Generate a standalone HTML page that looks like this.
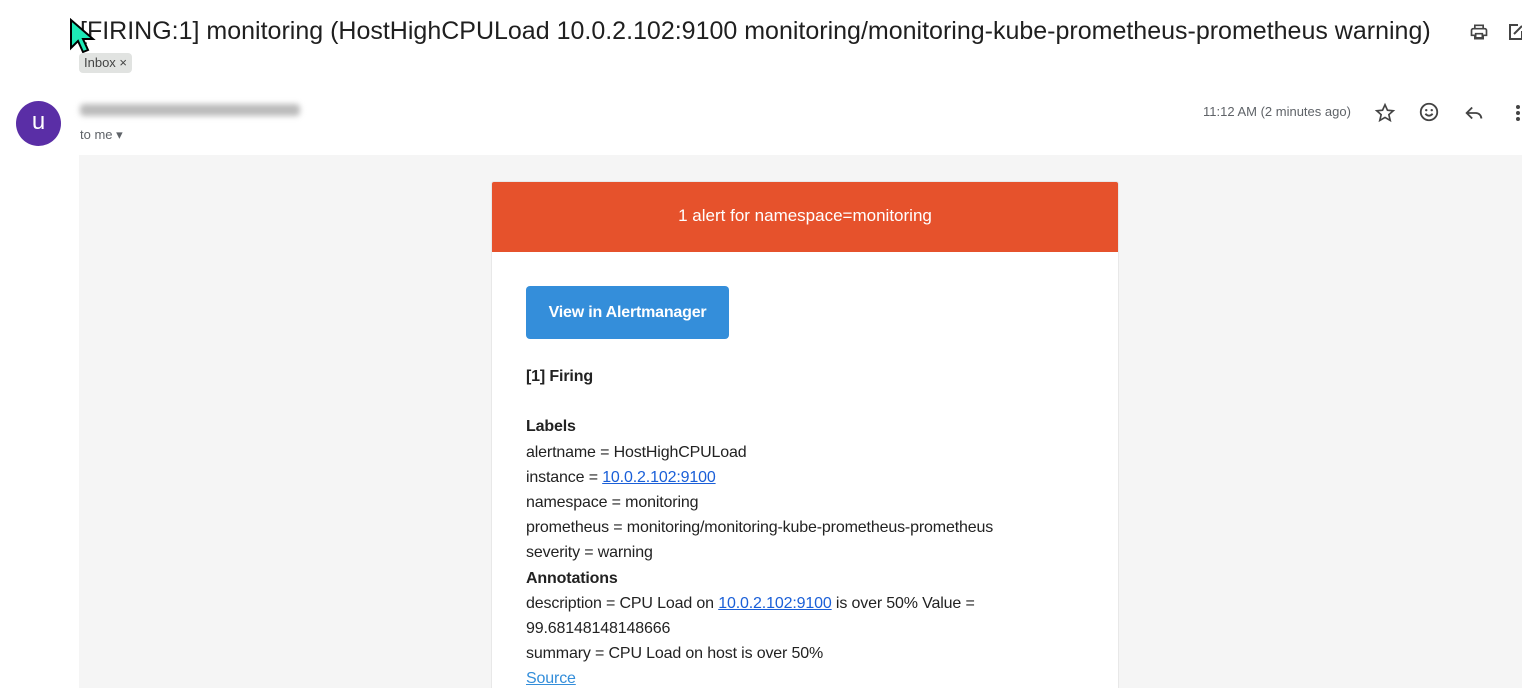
<!DOCTYPE html>
<html style="height:688px;overflow:hidden"><head><meta charset="utf-8"><style>
body{margin:0;width:1522px;height:688px;overflow:hidden;background:#fff;font-family:"Liberation Sans",Arial,sans-serif;position:relative;color:#202124}
.abs{position:absolute}
.title{left:80px;top:17px;font-size:25px;color:#1f1f1f;white-space:nowrap}
.chip{left:79px;top:53px;background:#e1e3e1;border-radius:4px;font-size:13px;color:#444;padding:2px 5px;height:16px;line-height:16px}
.av{left:16px;top:101px;width:45px;height:45px;border-radius:50%;background:#5a2ea6;color:#fff;font-size:24px;text-align:center;line-height:42px}
.blur{left:80px;top:104px;width:220px;height:12px;background:#bbb;filter:blur(3px);border-radius:4px}
.tome{left:80px;top:127px;font-size:13px;color:#5f6368}
.time{left:1203px;top:104px;font-size:13px;color:#5f6368}
.gray{left:79px;top:155px;right:0;bottom:0;background:#f5f5f5}
.card{left:491px;top:181px;width:626px;height:520px;background:#fff;border:1px solid #e8e8e8;border-radius:3px;overflow:hidden}
.hdr{height:70px;background:#e6522c;color:#fff;font-size:17px;text-align:center;line-height:68px}
.btn{position:absolute;left:34px;top:104px;width:203px;height:53px;background:#348eda;border-radius:4px;color:#fff;font-weight:bold;font-size:16px;text-align:center;line-height:53px;letter-spacing:-0.2px}
.txt{position:absolute;left:34px;top:182px;font-size:16px;line-height:25.2px;color:#222;letter-spacing:-0.15px}
a{color:#1a5fd8;text-decoration:underline}
svg{position:absolute}
</style></head><body>
<div class="abs title">[FIRING:1] monitoring (HostHighCPULoad 10.0.2.102:9100 monitoring/monitoring-kube-prometheus-prometheus warning)</div>
<svg style="left:69px;top:18px" width="30" height="36" viewBox="0 0 30 36"><path d="M2 2 L2 30 L9 23 L14 34 L19 32 L14 21 L24 21 Z" fill="#1de9b6" stroke="#000" stroke-width="2"/></svg>
<div class="abs chip">Inbox ×</div>
<svg style="left:1468px;top:22px" width="22" height="20" viewBox="0 0 24 24"><path d="M7 8V4h10v4M5 8h14a2 2 0 0 1 2 2v6h-4v4H7v-4H3v-6a2 2 0 0 1 2-2zM8 14h8v5H8z" fill="none" stroke="#444" stroke-width="2"/></svg>
<svg style="left:1508px;top:22px" width="14" height="20" viewBox="0 0 14 20"><path d="M10 3H2v14h12V9M6 12l8-8" fill="none" stroke="#444" stroke-width="2"/></svg>
<div class="abs av">u</div>
<div class="abs blur"></div>
<div class="abs tome">to me ▾</div>
<div class="abs time">11:12 AM (2 minutes ago)</div>
<svg style="left:1374px;top:102px" width="22" height="22" viewBox="0 0 24 24"><path d="M12 3l2.7 6 6.3.6-4.8 4.2 1.5 6.3L12 16.8 6.3 20.1l1.5-6.3L3 9.6 9.3 9z" fill="none" stroke="#444" stroke-width="1.8"/></svg>
<svg style="left:1418px;top:101px" width="22" height="22" viewBox="0 0 24 24"><circle cx="12" cy="12" r="9" fill="none" stroke="#444" stroke-width="2"/><circle cx="9" cy="10" r="1.3" fill="#444"/><circle cx="15" cy="10" r="1.3" fill="#444"/><path d="M8 14q4 4 8 0" fill="none" stroke="#444" stroke-width="2"/></svg>
<svg style="left:1463px;top:102px" width="22" height="22" viewBox="0 0 24 24"><path d="M10 6L4 12l6 6M4 12h10a6 6 0 0 1 6 6" fill="none" stroke="#444" stroke-width="2"/></svg>
<svg style="left:1514px;top:102px" width="8" height="22" viewBox="0 0 8 22"><circle cx="4" cy="5" r="2" fill="#444"/><circle cx="4" cy="11" r="2" fill="#444"/><circle cx="4" cy="17" r="2" fill="#444"/></svg>
<div class="abs gray"></div>
<div class="abs card">
<div class="hdr">1 alert for namespace=monitoring</div>
<div class="btn">View in Alertmanager</div>
<div class="txt"><b>[1] Firing</b><br><br><b>Labels</b><br>alertname = HostHighCPULoad<br>instance = <a>10.0.2.102:9100</a><br>namespace = monitoring<br>prometheus = monitoring/monitoring-kube-prometheus-prometheus<br>severity = warning<br><b>Annotations</b><br>description = CPU Load on <a>10.0.2.102:9100</a> is over 50% Value =<br>99.68148148148666<br>summary = CPU Load on host is over 50%<br><a style="color:#348eda">Source</a></div>
</div>
</body></html>
